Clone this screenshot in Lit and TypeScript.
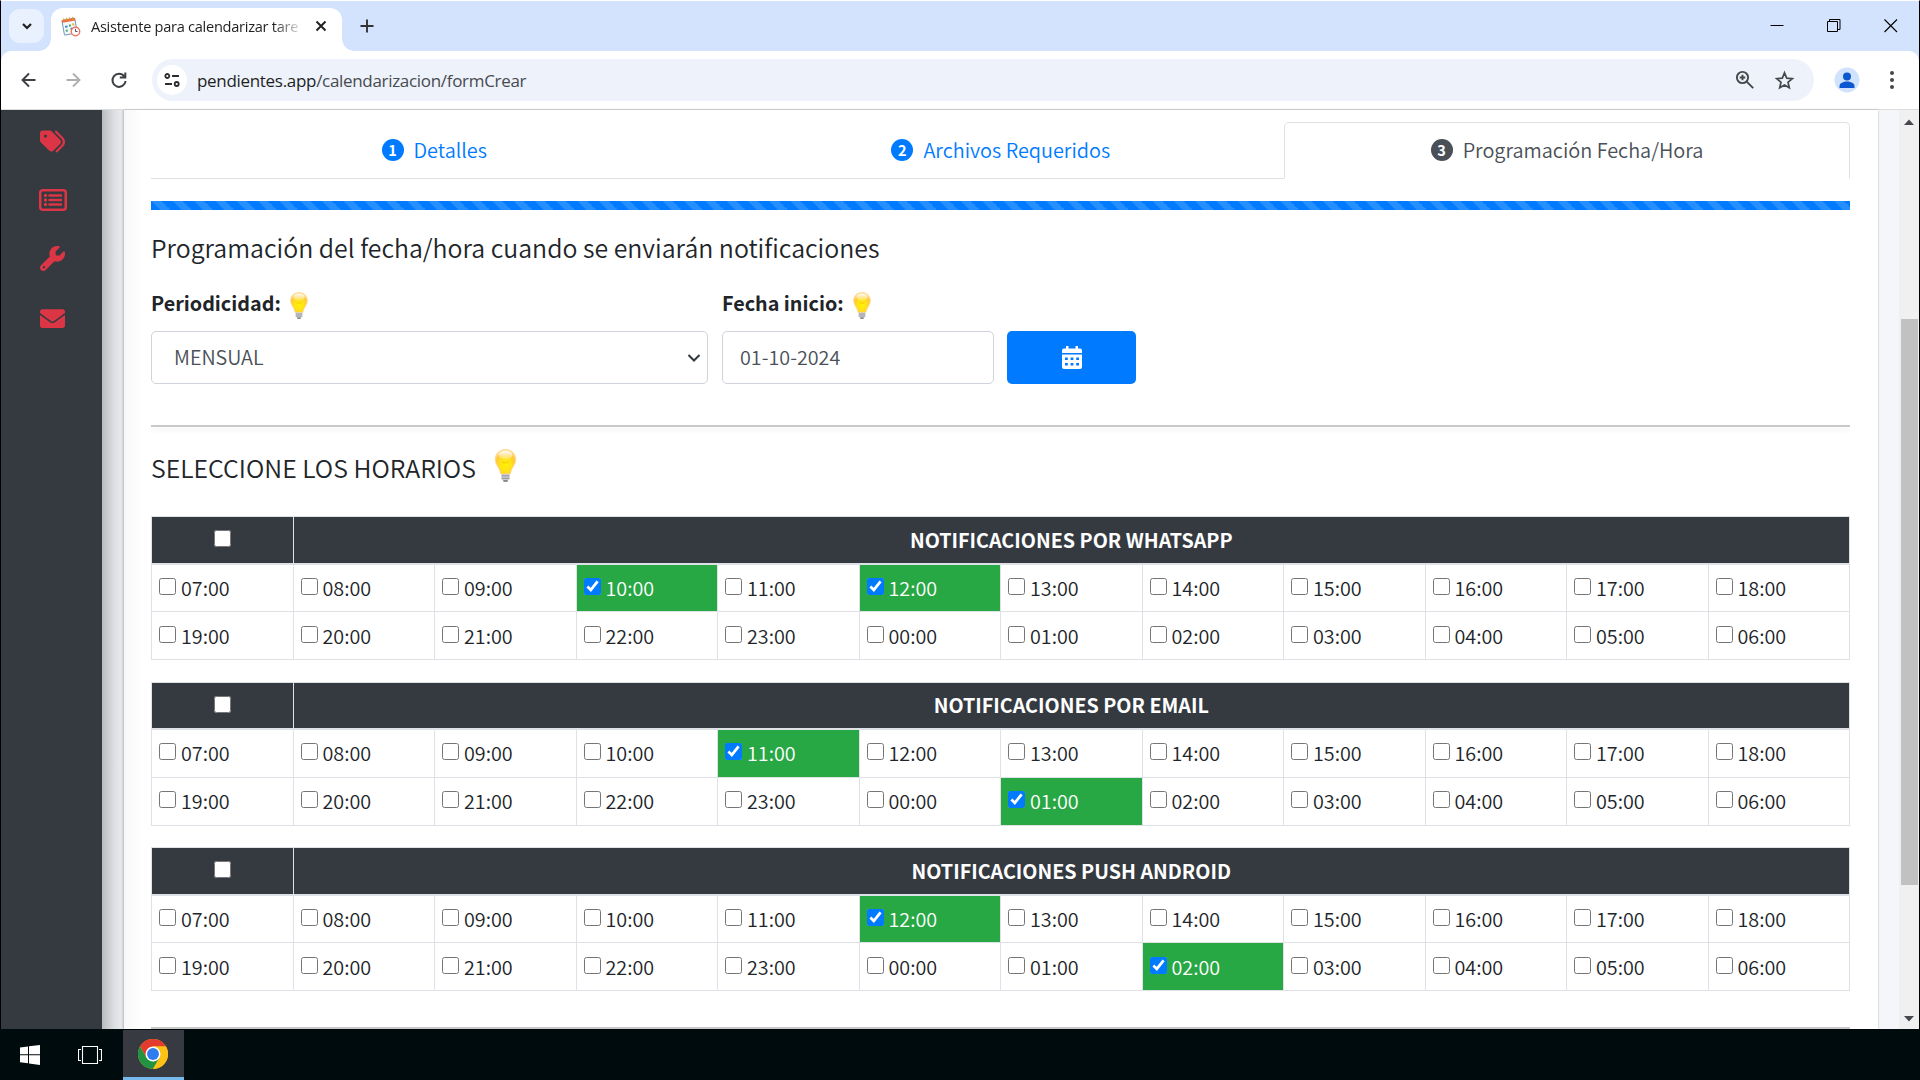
import { LitElement, html, css } from "lit";
import { customElement } from "lit/decorators.js";
import { classMap } from "lit/directives/class-map.js";

const HOURS = [
  ["07:00", "08:00", "09:00", "10:00", "11:00", "12:00", "13:00", "14:00", "15:00", "16:00", "17:00", "18:00"],
  ["19:00", "20:00", "21:00", "22:00", "23:00", "00:00", "01:00", "02:00", "03:00", "04:00", "05:00", "06:00"],
];

const TABLES = [
  { title: "NOTIFICACIONES POR WHATSAPP", on: ["10:00", "12:00"] },
  { title: "NOTIFICACIONES POR EMAIL", on: ["11:00", "01:00"] },
  { title: "NOTIFICACIONES PUSH ANDROID", on: ["12:00", "02:00"] },
];

const bulb = (cls: string) => html`<svg class=${cls} viewBox="0 0 18 27">
  <defs>
    <radialGradient id="glass" cx="0.5" cy="0.62" r="0.6">
      <stop offset="0" stop-color="#fff200" />
      <stop offset="0.45" stop-color="#ffe21a" />
      <stop offset="0.8" stop-color="#ffc83c" />
      <stop offset="1" stop-color="#ffdf9a" />
    </radialGradient>
    <linearGradient id="shine" x1="0" y1="0" x2="0" y2="1">
      <stop offset="0" stop-color="#fff" stop-opacity=".95" />
      <stop offset="1" stop-color="#fff" stop-opacity=".15" />
    </linearGradient>
  </defs>
  <path d="M9 .5C4 .5.6 4 .6 8.4c0 4.400 3.600 6.800 4.600 12.100h7.600c1-5.300 4.600-7.700 4.600-12.100C17.400 4 14 .5 9 .5z" fill="url(#glass)" stroke="#ffd58a" stroke-width=".7" />
  <ellipse cx="9" cy="5" rx="5.600" ry="3.600" fill="url(#shine)" />
  <path d="M6.500 10.500l1.500 1 1-.8 1 .8 1.500-1" fill="none" stroke="#f0b400" stroke-width=".6" />
  <path d="M5.700 20.500h6.600v4l-1.500 1.600H7.200l-1.500-1.600z" fill="#c9cbd0" />
  <path d="M5.700 22h6.600M5.700 24h6.600" stroke="#8b8d92" stroke-width=".7" />
  <path d="M7.300 26.200h3.400" stroke="#555" stroke-width="1" />
</svg>`;

@customElement("app-root")
export class AppRoot extends LitElement {
  static styles = css`
    :host { display: block; width: 1920px; height: 1080px; overflow: hidden; font-family: "Noto Sans CJK SC", "Noto Sans", sans-serif; font-weight: 350; color: #212529; background: #000b0d; }
    * { box-sizing: border-box; }
    svg { display: block; flex: none; }
    .window { height: 1029px; border: solid #000; border-width: 0 1px; background: #d3e3fd; border-top: 1px solid #fff; display: flex; flex-direction: column; }
    .strip { height: 50px; display: flex; padding: 8px 0 0 8px; position: relative; flex: none; }
    .search { width: 35px; height: 34px; border-radius: 11px; background: #e9f1fe; display: grid; place-items: center; }
    .tab { margin-left: 7px; margin-top: -1px; width: 291px; height: 43px; border-radius: 12px 12px 0 0; background: #fff; display: flex; align-items: center; padding: 0 15px 7px 10px; position: relative; }
    .tab::before, .tab::after { content: ""; position: absolute; bottom: 0; width: 12px; height: 12px; }
    .tab::before { left: -12px; background: radial-gradient(circle at 0 0, transparent 11.500px, #fff 12px); }
    .tab::after { right: -12px; background: radial-gradient(circle at 100% 0, transparent 11.500px, #fff 12px); }
    .title { font: 14.600px/20px "Open Sans", sans-serif; letter-spacing: -0.28px; color: #1f1f1f; margin-left: 10px; white-space: nowrap; -webkit-mask-image: linear-gradient(90deg, #000 88%, rgba(0,0,0,.2) 100%); mask-image: linear-gradient(90deg, #000 88%, rgba(0,0,0,.2) 100%); }
    .x { margin-left: auto; }
    .plus { margin: 10px 0 0 17.500px; }
    .wincontrols { margin-left: auto; display: flex; gap: 43px; padding: 10px 21px 0 0; }
    .toolbar { height: 58px; flex: none; background: #fff; border-radius: 10px 10px 0 0; display: flex; align-items: center; padding: 0 21px 0 16px; }
    .nav { display: flex; gap: 21px; }
    .omni { margin-left: 21px; width: 1662px; height: 42px; border-radius: 21px; background: #edf2fb; display: flex; align-items: center; padding: 0 19px 0 5px; }
    .site { width: 30px; height: 30px; border-radius: 50%; background: #fff; display: grid; place-items: center; }
    .url { font: 17px/26px "Open Sans", sans-serif; letter-spacing: -0.31px; margin-left: 10px; color: #474a4f; flex: 1; padding-top: 1px; }
    .url b { font-weight: 400; color: #1f1f1f; }
    .star { margin-left: 19px; }
    .avatar { margin-left: 20px; }
    .dots { margin-left: 29px; }
    .view { flex: 1; border-top: 1px solid #dcdcdc; display: flex; background: #f4f6f9; min-height: 0; }
    .side { width: 101px; background: #343a40; display: flex; flex-direction: column; align-items: center; fill: #dc3545; padding-left: 2px; }
    .s1 { margin-top: 19px; }
    .s2 { margin-top: 35px; }
    .s3 { margin-top: 35px; }
    .s4 { margin-top: 35px; }
    .shade { width: 22px; background: linear-gradient(90deg, #babbbd, #dcdee2 55%, #e7e9ed 85%, #d2d4d8); }
    .card { width: 1754px; background: linear-gradient(90deg, #f8f8f9, #fff 18px); box-shadow: 0 0 2px rgba(0,0,0,.25); padding: 12px 28px 0 27px; overflow: hidden; }
    .tabs { display: flex; height: 57px; }
    .step { flex: 1; display: flex; align-items: center; justify-content: center; font-size: 19.870px; color: #007bff; border-bottom: 1px solid #dee2e6; line-height: 30px; }
    .step.active { flex: 0 0 566px; color: #495057; border: 1px solid #dee2e6; border-bottom-color: transparent; border-radius: 5px 5px 0 0; padding-bottom: 1px; }
    .num { width: 22px; height: 22px; border-radius: 50%; background: #007bff; color: #fff; font: bold 14.500px/22px "Noto Sans CJK SC", sans-serif; text-align: center; margin-right: 10px; }
    .active .num { background: #495057; }
    .bar { margin-top: 22px; height: 9px; background: #007bff linear-gradient(45deg, rgba(255,255,255,.15) 25%, transparent 25%, transparent 50%, rgba(255,255,255,.15) 50%, rgba(255,255,255,.15) 75%, transparent 75%) 0 0 / 21.300px 21.300px; }
    h4 { font-size: 24.860px; font-weight: 350; line-height: 36px; margin: 19px 0 0; white-space: nowrap; }
    .form { display: flex; margin-top: 21px; }
    .field { margin-right: 14px; }
    label { display: flex; align-items: center; font-size: 19.750px; font-weight: 700; line-height: 30px; height: 33px; margin-bottom: 12px; white-space: nowrap; }
    .small { width: 18px; height: 27px; margin: 6px 0 0 9px; }
    .big { width: 23px; height: 33px; margin: -4px 0 0 18px; }
    .control { height: 53px; border: 1px solid #ced4da; border-radius: 5px; color: #495057; font-size: 19.750px; line-height: 49px; padding-bottom: 2px; display: flex; align-items: center; }
    .select { width: 557px; padding: 0 6px 2px 22px; justify-content: space-between; }
    .select svg { margin-top: 2px; }
    .date { width: 272px; padding-left: 17px; }
    .btn { width: 129px; height: 53px; border-radius: 5px; background: #007bff; display: grid; place-items: center; align-self: flex-end; margin-left: -1px; }
    .hr { height: 2px; background: #c9c9c9; box-shadow: 0 3px 5px rgba(0,0,0,.08); margin-top: 41px; }
    .select-title { display: flex; align-items: center; margin-top: 22px; height: 36px; margin-bottom: 31px; }
    .select-title h4 { margin: 0; }
    table { width: 1699px; table-layout: fixed; border-collapse: collapse; margin-bottom: 21.500px; }
    td, th { border: 1px solid #dee2e6; padding: 0; }
    th { background: #343a40; color: #fff; height: 47px; font-size: 19.700px; line-height: 30px; border-bottom-width: 2px; }
    td { height: 48px; font-size: 19.750px; line-height: 30px; }
    td.on { background: #28a745; color: #fff; }
    .slot { display: flex; align-items: center; padding-left: 7px; gap: 5px; }
    input { width: 17px; height: 17px; margin: 0; accent-color: #007bff; position: relative; top: -1.500px; }
    th input { display: block; margin: 0 auto; top: -1px; }
    .end { margin-top: 36px; }
    .scroll { width: 20px; margin-left: auto; background: #f0f0f0; display: flex; flex-direction: column; align-items: center; padding: 9px 0 7px; }
    .thumb { width: 17px; height: 566px; background: #c1c1c1; margin-top: 194px; }
    .down { margin-top: auto; }
    .task { height: 51px; display: flex; align-items: center; padding: 1px 0 0 20px; }
    .tv { margin-left: 38px; }
    .tile { margin-left: 21px; width: 61px; height: 50px; background: #373b41; border-bottom: 3px solid #76b9ed; display: grid; place-items: center; padding-right: 1px; }
  `;

  private table(t: { title: string; on: string[] }) {
    return html`<table>
      <tr><th><input type="checkbox" /></th><th colspan="11">${t.title}</th></tr>
      ${HOURS.map((row) => html`<tr>${row.map((h) => html`<td class=${classMap({ on: t.on.includes(h) })}>
        <div class="slot"><input type="checkbox" .checked=${t.on.includes(h)} /><span>${h}</span></div></td>`)}</tr>`)}
    </table>`;
  }

  render() {
    return html`
      <div class="window">
        <div class="strip">
          <div class="search"><svg width="12" height="12" viewBox="0 0 12 12"><path d="M2 4l4 4 4-4" fill="none" stroke="#1f1f1f" stroke-width="2.200" /></svg></div>
          <div class="tab">
            <svg width="20" height="21" viewBox="0 0 20 21">
              <g transform="rotate(-10 9 10)"><rect x="2" y="3" width="13" height="15" rx="1" fill="#f4f8fb" stroke="#6d9cc0" /><path d="M2 3h13v2.500H2z" fill="#f0653a" /><path d="M4 1.500v3M7 1.500v3M10 1.500v3M13 1.500v3" stroke="#e5a12c" stroke-width="1.200" />
              <path d="M4 9h2.500v2H4zM9 12h2v2H9z" fill="#3f87c4" /><path d="M8 8.500h2v2H8zM4 13h2v2H4z" fill="#4aa564" /><path d="M11.500 8h2v2h-2z" fill="#e8b32c" /></g>
              <circle cx="14.500" cy="15.500" r="4.200" fill="#fff" stroke="#e8775f" stroke-width="1.400" /><path d="M14.500 13v2.500h2" fill="none" stroke="#555" />
            </svg>
            <span class="title">Asistente para calendarizar tare</span>
            <svg class="x" width="12" height="12" viewBox="0 0 12 12"><path d="M1.500 1.500l9 9M10.500 1.500l-9 9" stroke="#1f1f1f" stroke-width="1.900" /></svg>
          </div>
          <svg class="plus" width="14" height="14" viewBox="0 0 14 14"><path d="M7 .5v13M.5 7h13" stroke="#333" stroke-width="1.900" /></svg>
          <div class="wincontrols">
            <svg width="14" height="14" viewBox="0 0 14 14"><path d="M.5 6.500h13" stroke="#000" /></svg>
            <svg width="14" height="14" viewBox="0 0 14 14"><path d="M.5 2.500h10v10H.5zM2.500 2.500v-2h10.500v10h-2.500" fill="none" stroke="#000" /></svg>
            <svg width="14" height="14" viewBox="0 0 14 14"><path d="M.5 .5l12.500 12.500M13 .5L.5 13" stroke="#000" stroke-width="1.100" /></svg>
          </div>
        </div>
        <div class="toolbar">
          <div class="nav">
            <svg width="24" height="24" viewBox="0 0 24 24"><path d="M18.500 12H6M12 5.500L5.500 12l6.500 6.500" fill="none" stroke="#3c3f43" stroke-width="1.900" /></svg>
            <svg width="24" height="24" viewBox="0 0 24 24"><path d="M4.500 12H17M11 5.500l6.500 6.500-6.500 6.500" fill="none" stroke="#adafb1" stroke-width="1.900" /></svg>
            <svg width="24" height="24" viewBox="0 0 24 24"><path d="M17.300 8.300A6.600 6.600 0 1 0 18.600 13M18.300 4.500v5h-5.500" fill="none" stroke="#3c3f43" stroke-width="2" /></svg>
          </div>
          <div class="omni">
            <div class="site"><svg width="16" height="16" viewBox="0 0 16 16"><g fill="none" stroke="#2b2d30" stroke-width="1.800"><circle cx="3.300" cy="4" r="2" /><path d="M8 4h7M1 12h7" /><circle cx="12.700" cy="12" r="2" /></g></svg></div>
            <span class="url"><b>pendientes.app</b>/calendarizacion/formCrear</span>
            <svg width="20" height="20" viewBox="0 0 20 20"><g fill="none" stroke="#45484c" stroke-width="1.900"><circle cx="7.500" cy="7.500" r="5.600" /><path d="M11.700 11.700l6.500 6.500M7.500 4.700v5.600M4.700 7.500h5.600" /></g></svg>
            <svg class="star" width="21" height="21" viewBox="0 0 21 21"><path d="M10.500 2.800l2.200 5.300 5.600.5-4.300 3.700 1.300 5.500-4.800-2.900-4.800 2.900L7 12.300 2.700 8.600l5.600-.5z" fill="none" stroke="#45484c" stroke-width="1.700" /></svg>
          </div>
          <svg class="avatar" width="26" height="26" viewBox="0 0 26 26"><circle cx="13" cy="13" r="12.500" fill="#d0e2fc" /><circle cx="13" cy="9.500" r="4" fill="#0b57d0" /><path d="M5.500 21v-2c0-3 4-4.500 7.500-4.500s7.500 1.500 7.500 4.500v2z" fill="#0b57d0" /></svg>
          <svg class="dots" width="6" height="20" viewBox="0 0 6 20"><g fill="#45484c"><circle cx="3" cy="3" r="2" /><circle cx="3" cy="10" r="2" /><circle cx="3" cy="17" r="2" /></g></svg>
        </div>
        <div class="view">
          <div class="side">
            <svg class="s1" width="25" height="25" viewBox="0 0 512 512"><path d="M345 39.100L472.800 168.400c52.400 53 52.400 138.200 0 191.200L360.800 472.900c-9.300 9.400-24.500 9.500-33.900 .2s-9.500-24.500-.2-33.900L438.600 325.900c33.900-34.300 33.900-89.400 0-123.700L310.900 72.900c-9.300-9.400-9.200-24.600 .2-33.900s24.600-9.200 33.900 .2zM0 229.500V80C0 53.500 21.500 32 48 32H197.500c17 0 33.300 6.700 45.300 18.700l168 168c25 25 25 65.500 0 90.500L277.300 442.700c-25 25-65.500 25-90.500 0l-168-168C6.700 262.700 0 246.500 0 229.500zM144 144a32 32 0 1 0 -64 0 32 32 0 1 0 64 0z" /></svg>
            <svg class="s2" width="28" height="22" viewBox="0 0 28 22"><rect x="1.250" y="1.250" width="25.500" height="19.500" rx="2.500" fill="none" stroke="#dc3545" stroke-width="2.500" /><g><circle cx="6.500" cy="6.500" r="1.700" /><circle cx="6.500" cy="11" r="1.700" /><circle cx="6.500" cy="15.500" r="1.700" /></g><path d="M10.500 6.500h11.500M10.500 11h11.500M10.500 15.500h11.500" stroke="#dc3545" stroke-width="2.600" stroke-linecap="round" /></svg>
            <svg class="s3" width="25" height="25" viewBox="0 0 512 512"><path d="M352 320c88.400 0 160-71.600 160-160c0-15.300-2.200-30.100-6.200-44.200c-3.100-10.800-16.400-13.200-24.300-5.300l-76.800 76.800c-3 3-7.100 4.700-11.300 4.700H336c-8.800 0-16-7.200-16-16V118.600c0-4.200 1.700-8.300 4.700-11.300l76.800-76.800c7.900-7.900 5.400-21.200-5.300-24.300C382.100 2.200 367.300 0 352 0C263.600 0 192 71.600 192 160c0 19.100 3.400 37.500 9.500 54.500L19.900 396.100C7.200 408.800 0 426.100 0 444.100C0 481.600 30.400 512 67.900 512c18 0 35.300-7.200 48-19.900L297.500 310.500c17 6.200 35.400 9.500 54.500 9.500zM80 408a24 24 0 1 1 0 48 24 24 0 1 1 0-48z" /></svg>
            <svg class="s4" width="25" height="25" viewBox="0 0 512 512"><path d="M502.300 190.800c3.900-3.100 9.700-.2 9.700 4.700V400c0 26.500-21.500 48-48 48H48c-26.500 0-48-21.500-48-48V195.600c0-5 5.700-7.800 9.700-4.700 22.400 17.400 52.100 39.500 154.100 113.600 21.100 15.400 56.700 47.800 92.200 47.600 35.700.3 72-32.800 92.300-47.600 102-74.100 131.600-96.300 154-113.700zM256 320c23.200.4 56.600-29.200 73.400-41.400 132.700-96.300 142.800-104.700 173.400-128.700 5.800-4.500 9.200-11.500 9.200-18.900v-19c0-26.500-21.500-48-48-48H48c-26.500 0-48 21.500-48 48v19c0 7.400 3.400 14.300 9.200 18.900 30.600 23.900 40.700 32.400 173.400 128.700 16.800 12.200 50.200 41.800 73.400 41.400z" /></svg>
          </div>
          <div class="shade"></div>
          <div class="card">
            <div class="tabs">
              <div class="step"><span class="num">1</span><span>Detalles</span></div>
              <div class="step"><span class="num">2</span><span>Archivos Requeridos</span></div>
              <div class="step active"><span class="num">3</span><span>Programación Fecha/Hora</span></div>
            </div>
            <div class="bar"></div>
            <h4>Programación del fecha/hora cuando se enviarán notificaciones</h4>
            <div class="form">
              <div class="field"><label>Periodicidad: ${bulb("small")}</label>
                <div class="control select"><span>MENSUAL</span><svg width="14" height="10" viewBox="0 0 14 10"><path d="M1.500 2L7 7.500 12.500 2" fill="none" stroke="#343a40" stroke-width="2.100" /></svg></div></div>
              <div class="field"><label>Fecha inicio: ${bulb("small")}</label>
                <div class="control date">01-10-2024</div></div>
              <div class="btn"><svg width="20" height="23" viewBox="0 0 20 23"><path d="M4 0h2.500v2.500h7V0H16v2.500h2a2 2 0 0 1 2 2V7H0V4.500a2 2 0 0 1 2-2h2z" fill="#fff" /><path fill-rule="evenodd" d="M0 8.500h20V21a2 2 0 0 1-2 2H2a2 2 0 0 1-2-2zM3 11.500v2.500h2.800v-2.500zM8.600 11.500v2.500h2.800v-2.500zM14.200 11.500v2.500H17v-2.500zM3 17v2.500h2.800V17zM8.600 17v2.500h2.800V17zM14.200 17v2.500H17V17z" fill="#fff" /></svg></div>
            </div>
            <div class="hr"></div>
            <div class="select-title"><h4>SELECCIONE LOS HORARIOS</h4>${bulb("big")}</div>
            ${TABLES.map((t) => this.table(t))}
            <div class="hr end"></div>
          </div>
          <div class="scroll">
            <svg width="10" height="6" viewBox="0 0 10 6"><path d="M0 6l5-5.500L10 6z" fill="#45484c" /></svg>
            <div class="thumb"></div>
            <svg class="down" width="10" height="6" viewBox="0 0 10 6"><path d="M0 0l5 5.500L10 0z" fill="#45484c" /></svg>
          </div>
        </div>
      </div>
      <div class="task">
        <svg width="20" height="20" viewBox="0 0 20 20"><path d="M0 2.600L8 1.500v7.800H0zM9 1.300L20 0v9.300H9zM0 10.300h8v7.900L0 17.200zM9 10.300h11V20L9 18.500z" fill="#fff" /></svg>
        <svg class="tv" width="24" height="18" viewBox="0 0 24 18"><path d="M4.500 .5h15v17h-15zM3 3.500H.5v11H3M21 3.500h2.500v11H21" fill="none" stroke="#fff" stroke-width="1.100" /></svg>
        <div class="tile"><svg width="30" height="30" viewBox="0 0 48 48">
          <circle cx="24" cy="24" r="24" fill="#fbc116" />
          <path d="M24 24L13.600 30 3.200 12A24 24 0 0 1 44.800 12H24z" fill="#e33b2e" />
          <path d="M3.200 12A24 24 0 0 0 24 48L34.400 30 24 36 13.600 30z" fill="#229342" />
          <path d="M24 12h20.800A24 24 0 0 1 24 48l10.400-18z" fill="#fbc116" />
          <circle cx="24" cy="24" r="12" fill="#fff" /><circle cx="24" cy="24" r="9.500" fill="#2f7cee" /></svg></div>
      </div>`;
  }
}
